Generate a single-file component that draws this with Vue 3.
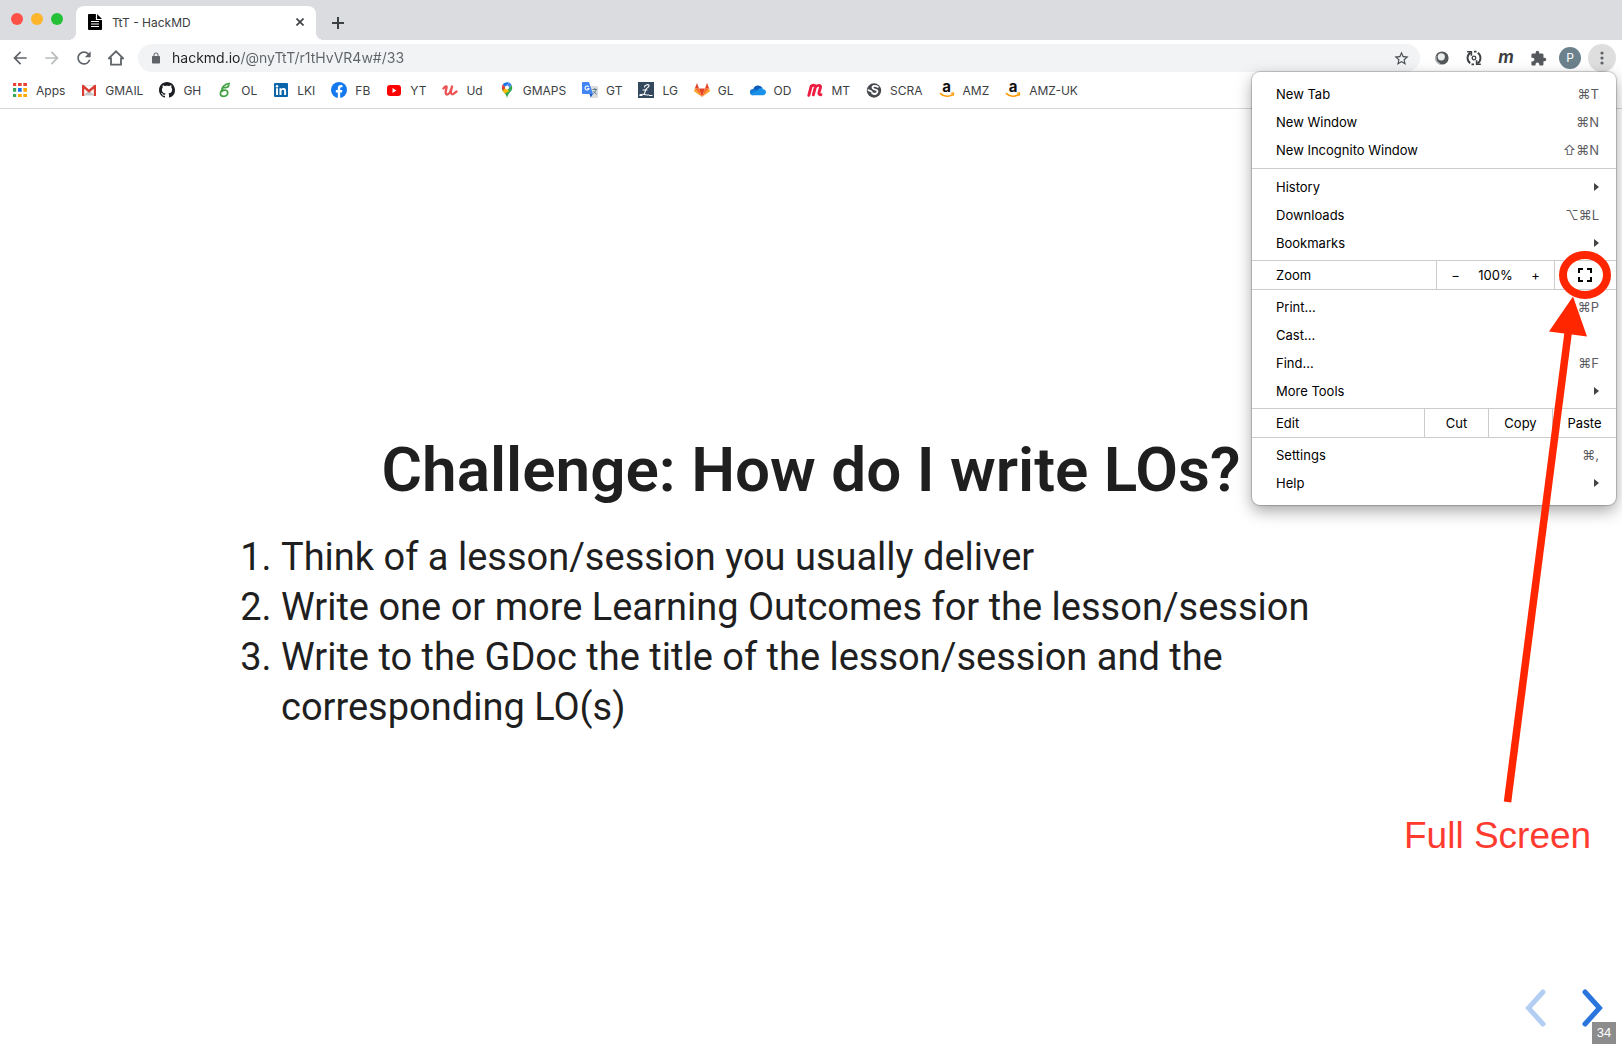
<script setup>
import { ref } from 'vue'

const url = ref('hackmd.io/@nyTtT/r1tHvVR4w#/33')

const bookmarks = [
  { label: 'Apps', icon: '<path fill="#ea4335" d="M1 1h4v3H1zM6 1h4v3H6zM11 1h4v3h-4z"/><path fill="#34a853" d="M1 6h4v4H1zM1 12h4v3H1z"/><path fill="#1a73e8" d="M6 6h4v4H6z"/><path fill="#fbab00" d="M11 6h4v4h-4zM6 12h4v3H6zM11 12h4v3h-4z"/><path stroke="#fff" d="M5 0v16M10.5 0v16M0 5h16M0 10.500h16" stroke-width="1.600"/>' },
  { label: 'GMAIL', icon: '<path fill="#e4e4e4" d="M1 3h14v11H1z"/><path fill="#fff" d="M3 4h10v9H3z"/><path fill="#c5c5c5" d="m3 13 5-5 5 5z"/><path fill="#d93c30" d="M1 3.200 2 2.600 8 7.600l6-5 1 .6V14h-2.200V6.800L8 10.800 3.200 6.800V14H1z"/>' },
  { label: 'GH', icon: '<path fill="#1b1f23" d="M8 0C3.58 0 0 3.58 0 8c0 3.54 2.29 6.53 5.47 7.59.4.07.55-.17.55-.38 0-.19-.01-.82-.01-1.49-2.01.37-2.53-.49-2.69-.94-.09-.23-.48-.94-.82-1.13-.28-.15-.68-.52-.01-.53.63-.01 1.08.58 1.23.82.72 1.21 1.87.87 2.33.66.07-.52.28-.87.51-1.07-1.78-.2-3.64-.89-3.64-3.95 0-.87.31-1.59.82-2.15-.08-.2-.36-1.02.08-2.12 0 0 .67-.21 2.2.82.64-.18 1.32-.27 2-.27s1.36.09 2 .27c1.53-1.04 2.2-.82 2.2-.82.44 1.1.16 1.92.08 2.12.51.56.82 1.27.82 2.15 0 3.07-1.87 3.75-3.65 3.95.29.25.54.73.54 1.48 0 1.07-.01 1.93-.01 2.2 0 .21.15.46.55.38A8.013 8.013 0 0 0 16 8c0-4.42-3.58-8-8-8z"/>' },
  { label: 'OL', icon: '<path fill="none" stroke="#46a247" stroke-width="1.700" d="M6.500 7C4.300 8.500 3.200 10.200 3.400 11.800c.6 3.600 7 3.200 7.300-.8.200-3-3-3.800-5.500-1.800C4 6 7 2 13 1.400M6.500 5.600c2.500.4 5-.6 5.500-2.800"/>' },
  { label: 'LKI', icon: '<rect x="1" y="1" width="14" height="14" rx="1" fill="#0a66a8"/><path fill="#fff" d="M3 6.300h2V13H3zM6.500 6.300h2v1c.4-.7 1.100-1.200 2.100-1.200 2 0 2.500 1.300 2.500 3.100V13h-2V9.600c0-.9-.1-1.800-1.200-1.800S8.500 8.700 8.500 9.600V13h-2z"/><circle cx="4" cy="4.200" r="1.200" fill="#fff"/>' },
  { label: 'FB', icon: '<circle cx="8" cy="8" r="8" fill="#1478ee"/><path fill="#fff" d="M6.800 16v-5.600H4.800V8h2V6.300c0-2 1.200-3.200 3-3.200l1.700.2v2h-1c-1 0-1.300.6-1.300 1.200V8h2.200l-.4 2.400H9.200V16z"/>' },
  { label: 'YT', icon: '<rect x="1" y="3" width="14" height="11" rx="3" fill="#f00"/><path fill="#fff" d="m6.500 6 4 2.500-4 2.500z"/>' },
  { label: 'Ud', icon: '<path fill="none" stroke="#ec5252" stroke-width="2.300" stroke-linecap="round" stroke-linejoin="round" d="M1.500 6.500C3 4 5 3.600 4.600 5.500c-.5 2.500-2 7 .4 7 2 0 4-4 5-8-1 4-2 7.500.2 7.800 1.600.1 3-1.800 4.300-2.800"/>' },
  { label: 'GMAPS', icon: '<path fill="#34a853" d="M2.800 6c0 4 4.200 4.500 5.200 10 1-5.500 5.200-6 5.200-10z"/><path fill="#fbbc04" d="m3.500 8.700 6.500-6 1 6-5.200 2.800z"/><path fill="#ea4335" d="M3.700 2.600 6.800 5.200 4 8.400C2.500 6.600 2.500 4.200 3.700 2.600z"/><path fill="#1a73e8" d="M3.700 2.600C5.300.4 8-.3 10 .5L6.800 5.200z"/><path fill="#4285f4" d="M10 .5c1.200.5 2 1.300 2.600 2.500L9 7.500 6.800 5.200z"/><path fill="#34a853" d="M12.600 3c1.200 2.600.4 4.500-1.600 6.500L8.600 7.800z"/><circle cx="8" cy="5.400" r="2" fill="#fff"/>' },
  { label: 'GT', icon: '<path fill="#dadce0" d="M6 4h9q1 0 1 1v10q0 1-1 1H9z"/><path fill="#4285f4" d="M1 0h6l4 12H1q-1 0-1-1V1q0-1 1-1z"/><path fill="#1a57c4" d="M7.500 12H11l-2.300 3.500z"/><path fill="none" stroke="#fff" stroke-width="1.100" d="M6.700 4.900A2 2 0 1 0 7 6.500H5.200"/><path fill="none" stroke="#607d8b" stroke-width="1" d="M10.500 7.500H15M12.800 6v1.500M14.200 7.500c-.5 2-1.500 3-3 4M11.500 9l3 3.500"/>' },
  { label: 'LG', icon: '<path fill="#34495e" d="M0 0h16v16H0z"/><path fill="none" stroke="#fff" stroke-width="1.100" stroke-linecap="round" d="M6.500 5C6.500 2.600 11.600 1.600 11 4c-.4 1.600-2.600 2-3.200 3.500L6.200 12.300M2 12.800c2.500-1.800 5 1 8.500 0M5 8h4"/><path stroke="#fff" d="M11 13.500h3.500M1.500 13.500h3"/>' },
  { label: 'GL', icon: '<path fill="#e24329" d="m8 15 3-8.500H5z"/><path fill="#fc6d26" d="M8 15 5 6.500H.800zM8 15l3-8.500h4.200z"/><path fill="#fca326" d="M.8 6.500 0 9.200 8 15zM15.200 6.500l.8 2.700L8 15z"/><path fill="#e24329" d="M.8 6.500H5L3 1zM15.200 6.500H11L13 1z"/>' },
  { label: 'OD', icon: '<path fill="#0a5cb8" d="M3.200 7.500A5 5 0 0 1 12.500 6l-1 4-8 1z"/><path fill="#1577d2" d="M0 10.300A3.300 3.300 0 0 1 3.500 7c1.500 0 2.200.5 3.500 1.400L3 13.300C1.200 13.300 0 12 0 10.300z"/><path fill="#1a91e8" d="M7 8.500C9 5.200 12.500 5.400 13 7.200c2 .1 3 1.500 3 3s-1.200 3.100-3 3.100H3.300C1.600 13.300.8 12.400.5 11.500z"/>' },
  { label: 'MT', icon: '<path fill="none" stroke="#ed1c40" stroke-width="2.900" stroke-linecap="round" stroke-linejoin="round" d="M1.800 13.300 4.200 4.200C6.500 2.600 8.800 3.200 8.300 5.300L6.300 12.800M8.300 5.300C10.300 2.600 14.200 2.800 13.500 5.300L12 10.500c-.4 1.700.5 2.300 2 2.200"/>' },
  { label: 'SCRA', icon: '<circle cx="8" cy="8.500" r="7.200" fill="#46494e"/><path fill="none" stroke="#fff" stroke-width="1.900" stroke-linecap="round" d="M11.800 4.800C8 2.800 5.500 4.700 7 6.500s4.500.4 4.500 2.800-3 3.600-5.300 1.700M2.500 8.200l3 1.300"/>' },
  { label: 'AMZ', icon: 'amazon' },
  { label: 'AMZ-UK', icon: 'amazon' },
]
const amazonSwoosh = '<path fill="none" stroke="#f90" stroke-width="1.600" stroke-linecap="round" d="M1.500 11.600c3.500 3.400 8.800 3.300 12 1"/><path fill="none" stroke="#f90" stroke-width="1.100" d="M11.800 11.300c1.600-.6 3-.6 3 0s-.3 1.700-1 2.700"/>'

const menuTop = [
  { label: 'New Tab', keys: '⌘T' },
  { label: 'New Window', keys: '⌘N' },
  { label: 'New Incognito Window', keys: '⇧⌘N' },
]
const menuHistory = [
  { label: 'History', sub: true },
  { label: 'Downloads', keys: '⌥⌘L' },
  { label: 'Bookmarks', sub: true },
]
const menuTools = [
  { label: 'Print...', keys: '⌘P' },
  { label: 'Cast...' },
  { label: 'Find...', keys: '⌘F' },
  { label: 'More Tools', sub: true },
]
const menuEnd = [
  { label: 'Settings', keys: '⌘,' },
  { label: 'Help', sub: true },
]
const groups = [
  { items: menuTop },
  { items: menuHistory, after: 'zoom' },
  { items: menuTools, after: 'edit' },
  { items: menuEnd },
]
</script>

<template>
  <div class="window">
    <header class="browser">
      <div class="tabstrip">
        <div class="lights"><i class="red"></i><i class="amber"></i><i class="green"></i></div>
        <div class="tab">
          <svg class="favicon" viewBox="0 0 14 16"><path d="M1 0h8l5 5v10q0 1-1 1H1q-1 0-1-1V1q0-1 1-1z" /><path d="M8.500 0v5.500H14M3 7.500h8M3 10h8M3 12.500h8" fill="none" stroke="#fff" stroke-width="1.200" /></svg>
          <span class="tab-title">TtT - HackMD</span>
          <button class="bare tab-close" aria-label="Close tab"><svg width="8" height="8" viewBox="0 0 8 8"><path d="m0.500 0.500 7 7m0-7-7 7" stroke="#3c4043" stroke-width="1.600" /></svg></button>
        </div>
        <button class="bare new-tab" aria-label="New tab"><svg width="12" height="12" viewBox="0 0 12 12"><path d="M6 0v12M0 6h12" stroke="#3c4043" stroke-width="2" /></svg></button>
      </div>

      <div class="toolbar">
        <button class="bare tool" aria-label="Back"><svg viewBox="0 0 24 24" width="20" height="20"><path fill="#5f6368" d="M20 11H7.830l5.590-5.590L12 4l-8 8 8 8 1.410-1.410L7.830 13H20v-2z" /></svg></button>
        <button class="bare tool" aria-label="Forward"><svg viewBox="0 0 24 24" width="20" height="20"><path fill="#babcbe" d="m12 4-1.410 1.410L16.170 11H4v2h12.170l-5.580 5.590L12 20l8-8z" /></svg></button>
        <button class="bare tool" aria-label="Reload"><svg viewBox="0 0 24 24" width="20" height="20"><path fill="#5f6368" d="M17.650 6.350A7.958 7.958 0 0 0 12 4c-4.420 0-7.990 3.580-7.990 8s3.570 8 7.990 8c3.730 0 6.840-2.550 7.730-6h-2.080A5.990 5.990 0 0 1 12 18c-3.310 0-6-2.690-6-6s2.690-6 6-6c1.660 0 3.140.69 4.220 1.780L13 11h7V4l-2.350 2.350z" /></svg></button>
        <button class="bare tool" aria-label="Home"><svg viewBox="0 0 16 16" width="16" height="16"><path fill="none" stroke="#5f6368" stroke-width="1.800" d="M.800 8.400 8 1.300l7.200 7.100H13v6.200H3V8.400z" /></svg></button>
        <div class="omnibox">
          <svg viewBox="0 0 24 24" width="12" height="12"><path fill="#5f6368" d="M18 8h-1V6c0-2.760-2.240-5-5-5S7 3.240 7 6v2H6c-1.100 0-2 .9-2 2v11c0 1.100.9 2 2 2h12c1.100 0 2-.9 2-2V10c0-1.100-.9-2-2-2zM8.900 6c0-1.710 1.390-3.100 3.100-3.100s3.100 1.390 3.100 3.100v2H8.900V6z" /></svg>
          <input v-model="url" class="url" type="text" aria-label="Address" spellcheck="false">
          <button class="bare" aria-label="Bookmark this page"><svg viewBox="0 0 24 24" width="17" height="17"><path fill="#4a4d51" d="M22 9.240l-7.190-.62L12 2 9.190 8.630 2 9.240l5.460 4.730L5.820 21 12 17.270 18.180 21l-1.630-7.030L22 9.240zM12 15.400l-3.760 2.270 1-4.280-3.320-2.880 4.380-.38L12 6.100l1.710 4.040 4.380.38-3.320 2.880 1 4.280L12 15.400z" /></svg></button>
        </div>
        <div class="extensions">
          <button class="bare ext" aria-label="Sphere extension"><svg viewBox="0 0 14 14" width="14" height="14"><circle cx="7" cy="7" r="6.600" fill="#55585b" /><path d="M1 5a6.300 6.300 0 0 0 4 8" stroke="#b4b6b8" stroke-width="1.600" fill="none" /><circle cx="6.300" cy="5.800" r="3.600" fill="#eceded" /></svg></button>
          <button class="bare ext" aria-label="Sync extension"><svg viewBox="0 0 16 16" width="16" height="16"><g fill="none" stroke="#3c4043" stroke-width="1.900"><path d="M4.500 2.600A6.400 6.400 0 0 0 4.200 13.200M11.500 13.400A6.400 6.400 0 0 0 11.800 2.800" /><path stroke-width="1.600" d="M1.200 1.800h4.200v4M14.800 14.200h-4.200v-4M8 1.600h2.500M8 14.400H5.500" /></g><circle cx="8" cy="8" r="1.800" fill="none" stroke="#3c4043" stroke-width="1.300" /></svg></button>
          <button class="bare ext ext-m">m</button>
          <button class="bare ext" aria-label="Extensions"><svg viewBox="0 0 24 24" width="17" height="17"><path fill="#55595d" d="M20.500 11H19V7c0-1.100-.9-2-2-2h-4V3.500a2.500 2.500 0 0 0-5 0V5H4c-1.100 0-1.990.9-1.990 2v3.800H3.500c1.490 0 2.700 1.210 2.700 2.700s-1.210 2.700-2.700 2.700H2V20c0 1.100.9 2 2 2h3.800v-1.500c0-1.490 1.210-2.700 2.700-2.700s2.700 1.210 2.700 2.700V22H17c1.100 0 2-.9 2-2v-4h1.500a2.500 2.500 0 0 0 0-5z" /></svg></button>
          <button class="bare ext"><span class="avatar">P</span></button>
          <button class="bare ext" aria-label="Chrome menu"><span class="more"><svg viewBox="0 0 4 14" width="4" height="14"><g fill="#5f6368"><circle cx="2" cy="2" r="1.600" /><circle cx="2" cy="7" r="1.600" /><circle cx="2" cy="12" r="1.600" /></g></svg></span></button>
        </div>
      </div>

      <nav class="bookmarks" aria-label="Bookmarks">
        <a v-for="b in bookmarks" :key="b.label" href="#" class="bookmark">
          <span v-if="b.icon === 'amazon'" class="amazon">
            <b>a</b>
            <svg viewBox="0 0 16 16" v-html="amazonSwoosh"></svg>
          </span>
          <svg v-else viewBox="0 0 16 16" width="16" height="16" v-html="b.icon"></svg>
          <span>{{ b.label }}</span>
        </a>
      </nav>
    </header>

    <main class="slide">
      <section>
        <h1>Challenge: How do I write LOs?</h1>
        <ol>
          <li>Think of a lesson/session you usually deliver</li>
          <li>Write one or more Learning Outcomes for the lesson/session</li>
          <li>Write to the GDoc the title of the lesson/session and the corresponding LO(s)</li>
        </ol>
      </section>
      <div class="controls">
        <button class="bare prev" aria-label="Previous slide"><svg viewBox="0 0 22 38" width="22" height="38"><path d="M18 3 3.500 19 18 35" /></svg></button>
        <button class="bare next" aria-label="Next slide"><svg viewBox="0 0 22 38" width="22" height="38"><path d="M4 3l14.500 16L4 35" /></svg></button>
      </div>
      <span class="page-number">34</span>
    </main>

    <div class="menu" role="menu">
      <template v-for="(g, i) in groups" :key="i">
        <div class="group">
          <button v-for="item in g.items" :key="item.label" class="bare item" role="menuitem">
            <span>{{ item.label }}</span>
            <span v-if="item.keys" class="keys">{{ item.keys }}</span>
            <i v-if="item.sub" class="caret"></i>
          </button>
        </div>
        <div v-if="g.after === 'zoom'" class="split">
          <span class="split-label">Zoom</span>
          <div class="zoom">
            <button class="bare" aria-label="Zoom out">−</button>
            <span>100%</span>
            <button class="bare" aria-label="Zoom in">+</button>
          </div>
          <button class="bare fullscreen" aria-label="Full screen"><svg viewBox="0 0 14 14" width="14" height="14"><path d="M5 1H1v4M9 1h4v4M5 13H1V9M9 13h4V9" fill="none" stroke="#000" stroke-width="2" /></svg></button>
        </div>
        <div v-if="g.after === 'edit'" class="split">
          <span class="split-label">Edit</span>
          <button class="bare edit">Cut</button>
          <button class="bare edit">Copy</button>
          <button class="bare edit">Paste</button>
        </div>
      </template>
    </div>

    <div class="callout">
      <svg viewBox="0 0 122 560" width="122" height="560">
        <ellipse cx="85" cy="30" rx="22" ry="20" fill="none" stroke="#ff2600" stroke-width="8" />
        <path d="M7.500 557 68.500 85" stroke="#ff2600" stroke-width="7.500" />
        <path d="m73 51.500 14 40-38-5z" fill="#ff2600" />
      </svg>
      <span>Full Screen</span>
    </div>
  </div>
</template>

<style>
body {
  margin: 0;
  background: #fff;
}
</style>

<style scoped>
.window {
  position: relative;
  display: flex;
  flex-direction: column;
  min-height: 100vh;
  overflow: hidden;
  font-family: Inter, "Liberation Sans", sans-serif;
  font-size: 12px;
  color: #3c4043;
}
svg {
  display: block;
  flex: none;
}
.bare {
  display: flex;
  align-items: center;
  justify-content: center;
  padding: 0;
  border: 0;
  background: none;
  font: inherit;
  color: inherit;
}

.tabstrip {
  display: flex;
  align-items: flex-end;
  height: 40px;
  background: #dadce0;
}
.lights {
  display: flex;
  align-self: center;
  gap: 8px;
  width: 65px;
  padding: 0 0 2px 11px;
}
.lights i {
  width: 12px;
  height: 12px;
  border-radius: 50%;
}
.red { background: #ff5048; }
.amber { background: #fdb52b; }
.green { background: #24c138; }
.tab {
  position: relative;
  display: flex;
  align-items: center;
  box-sizing: border-box;
  width: 240px;
  height: 34px;
  padding: 0 12px 2px;
  border-radius: 8px 8px 0 0;
  background: #fff;
}
.tab::before,
.tab::after {
  content: "";
  position: absolute;
  bottom: 0;
  width: 8px;
  height: 8px;
}
.tab::before {
  right: 100%;
  background: radial-gradient(circle at 0 0, transparent 8px, #fff 8px);
}
.tab::after {
  left: 100%;
  background: radial-gradient(circle at 100% 0, transparent 8px, #fff 8px);
}
.favicon {
  width: 14px;
  height: 16px;
}
.tab-title {
  flex: 1;
  margin-left: 10px;
}
.new-tab {
  height: 34px;
  margin-left: 16px;
}

.toolbar {
  display: flex;
  align-items: center;
  height: 36px;
  padding: 0 4px;
}
.tool {
  width: 32px;
  height: 32px;
}
.omnibox {
  flex: 1;
  display: flex;
  align-items: center;
  height: 28px;
  margin: 0 6px;
  padding: 0 10px 0 12px;
  border-radius: 14px;
  background: #f1f3f4;
}
.url {
  flex: 1;
  min-width: 0;
  margin-left: 10px;
  padding: 0;
  border: 0;
  outline: 0;
  font: 14px/20px Inter, "Liberation Sans", sans-serif;
  color: transparent;
  /* host in dark ink, path in grey */
  background: linear-gradient(90deg, #202124 68px, #5f6368 68px);
  -webkit-background-clip: text;
  background-clip: text;
}
.extensions {
  display: flex;
}
.ext {
  width: 32px;
  height: 32px;
}
.ext-m {
  padding-bottom: 2px;
  font-size: 17px;
  font-weight: 700;
  font-style: italic;
}
.avatar {
  width: 22px;
  border-radius: 50%;
  background: #6b818c;
  line-height: 22px;
  color: #fff;
}
.more {
  display: flex;
  align-items: center;
  justify-content: center;
  width: 28px;
  height: 28px;
  border-radius: 50%;
  background: #dedede;
}

.bookmarks {
  display: flex;
  align-items: center;
  gap: 16px;
  padding: 0 12px 4px;
  border-bottom: 1px solid #d5d6da;
}
.bookmark {
  display: flex;
  align-items: center;
  gap: 8px;
  height: 28px;
  color: #3c4043;
  text-decoration: none;
  white-space: nowrap;
}
.amazon {
  position: relative;
  width: 16px;
  height: 16px;
  text-align: center;
  font-size: 15px;
  line-height: 10px;
  color: #111;
}
.amazon svg {
  position: absolute;
  inset: 0;
}

.slide {
  position: relative;
  flex: 1;
  display: flex;
  align-items: center;
  justify-content: center;
  color: #1f1f1f;
  font-family: Roboto, Inter, sans-serif;
}
.slide section {
  width: 1142px;
  max-width: 90%;
  padding-top: 8px;
}
h1 {
  margin: 0 0 26px;
  text-align: center;
  font-size: 62px;
  line-height: 72px;
  font-weight: 600;
}
ol {
  margin: 0;
  padding: 0 60px 0 41px;
  font-size: 38px;
  line-height: 50px;
}
.controls {
  position: absolute;
  right: 19px;
  bottom: 22px;
  display: flex;
  gap: 34px;
}
.controls path {
  fill: none;
  stroke: #2a76dd;
  stroke-width: 5;
  stroke-linecap: round;
}
.prev { opacity: .35; }
.page-number {
  position: absolute;
  right: 6px;
  bottom: 5px;
  width: 24px;
  background: #8c8c8c;
  text-align: center;
  font: 13px/22px "Liberation Sans", sans-serif;
  color: #fff;
}

.menu {
  position: absolute;
  top: 72px;
  right: 6px;
  width: 364px;
  padding: 4px 0;
  border-radius: 8px;
  background: #fff;
  box-shadow: 0 0 1px 1px rgba(0, 0, 0, .2), 0 6px 16px rgba(0, 0, 0, .35);
  font-size: 13px;
  color: #000;
}
.group {
  padding: 4px 0;
}
.group + .group {
  border-top: 1px solid #ccc;
}
.group:has(+ .split) {
  padding-bottom: 3px;
}
.item {
  justify-content: space-between;
  width: 100%;
  height: 28px;
  padding: 0 17px 0 24px;
}
.keys {
  font-family: Inter, "DejaVu Sans", sans-serif;
  color: #5a5a60;
}
.caret {
  border-left: 5px solid #444;
  border-top: 4px solid transparent;
  border-bottom: 4px solid transparent;
}
.split {
  display: flex;
  height: 28px;
  border: solid #ccc;
  border-width: 1px 0;
}
.split + .group {
  padding-top: 3px;
}
.split-label {
  flex: 1;
  padding-left: 24px;
  line-height: 28px;
}
.zoom {
  display: grid;
  grid-template-columns: 37px 43px 37px;
  align-items: center;
  text-align: center;
  border-left: 1px solid #ccc;
}
.fullscreen {
  width: 62px;
  padding-right: 1px;
  border-left: 1px solid #ccc;
}
.edit {
  width: 64px;
  border-left: 1px solid #ccc;
}

.callout {
  position: absolute;
  top: 245px;
  right: 0;
  width: 218px;
  pointer-events: none;
}
.callout svg {
  margin-left: auto;
}
.callout span {
  display: block;
  margin-top: 9px;
  font: 37px/44px "Liberation Sans", sans-serif;
  color: #ff3b30;
}
</style>
